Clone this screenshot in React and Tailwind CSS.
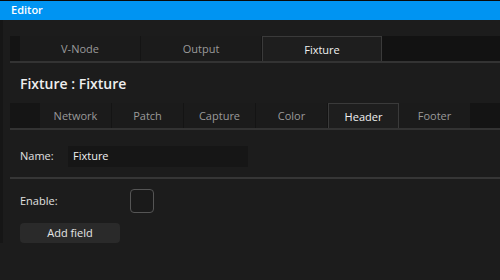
export default function App() {
  const tabs1 = ["V-Node", "Output", "Fixture"];
  const tabs2 = ["Network", "Patch", "Capture", "Color", "Header", "Footer"];
  return (
    <div className="w-[500px] h-[280px] bg-[#1c1c1c] overflow-hidden text-[#e6e6e6]" style={{ fontFamily: '"Open Sans", "Noto Sans", sans-serif' }}>
      <div className="h-[20px] bg-[#0094f2] border-t border-[#0a0a0a] flex items-center pl-[11px] text-[11px] font-semibold text-white">
        Editor
      </div>
      <div className="flex">
        <div className="w-[3px] bg-[#161616]" />
        <div className="flex-1 pl-[7px]">
          <div className="mt-[16px] flex h-[27px] bg-[#121212] border-b-2 border-[#333333]">
            <div className="w-[10px] bg-[#141414]" />
            {tabs1.map((t, i) => (
              <div
                key={t}
                className={
                  i === 2
                    ? "w-[120px] flex items-center justify-center pt-[2px] text-[11px] font-medium text-[#f0f0f0] bg-[#1e1e1e] border border-b-0 border-[#3a3a3a]"
                    : "w-[121px] flex items-center justify-center pt-[2px] text-[11px] font-medium text-[#9a9a9a] bg-[#1b1b1b] border-r border-[#141414]"
                }
              >
                {t}
              </div>
            ))}
          </div>
          <div className="h-[40px] flex items-center pl-[10px] text-[14px] font-semibold text-[#eeeeee]">
            Fixture : Fixture
          </div>
          <div className="flex h-[27px] bg-[#141414] border-b-2 border-[#333333]">
            <div className="w-[30px] bg-[#151515]" />
            {tabs2.map((t) => (
              <div
                key={t}
                className={
                  t === "Header"
                    ? "w-[71px] flex items-center justify-center pt-[2px] text-[11px] font-medium text-[#f0f0f0] bg-[#1e1e1e] border border-b-0 border-[#3a3a3a]"
                    : "w-[72px] flex items-center justify-center pt-[2px] text-[11px] font-medium text-[#9a9a9a] bg-[#1b1b1b] border-r border-[#141414]"
                }
              >
                {t}
              </div>
            ))}
          </div>
          <div className="flex items-center h-[22px] mt-[15px] pl-[10px]">
            <div className="w-[48px] text-[11px] text-[#e0e0e0]">Name:</div>
            <div className="w-[180px] h-[21px] bg-[#161616] flex items-center pl-[5px] text-[11px] text-[#f0f0f0]">Fixture</div>
          </div>
          <div className="mt-[10px] h-[2px] bg-[#363636]" />
          <div className="flex items-center h-[24px] mt-[10px] pl-[10px]">
            <div className="w-[110px] text-[11px] text-[#e0e0e0]">Enable:</div>
            <div className="w-[24px] h-[24px] rounded-[4px] border border-[#555555] bg-[#1a1a1a]" />
          </div>
          <div className="ml-[10px] mt-[10px] w-[100px] h-[20px] rounded-[4px] bg-[#2a2a2a] flex items-center justify-center text-[11px] text-[#e6e6e6]">
            Add field
          </div>
        </div>
      </div>
    </div>
  );
}
